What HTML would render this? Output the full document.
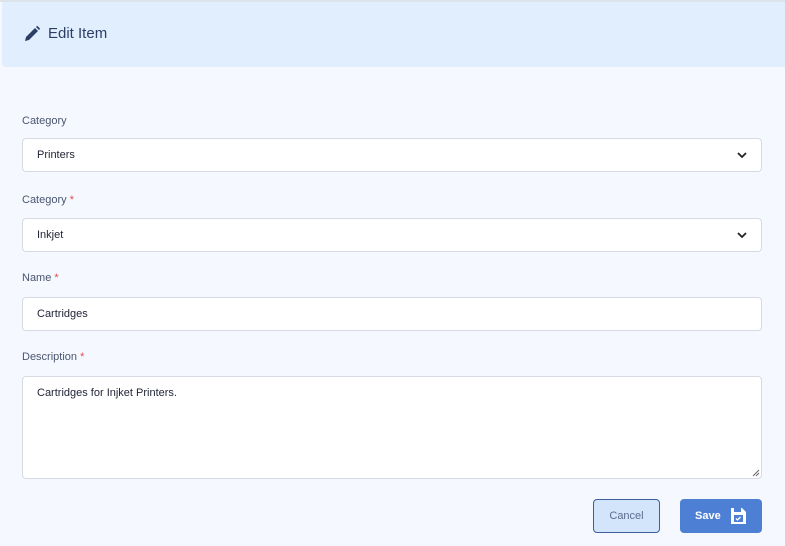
<!DOCTYPE html>
<html><head><style>
*{box-sizing:border-box;margin:0;padding:0}
body{width:785px;height:546px;overflow:hidden;background:#f5f9ff;font-family:"Liberation Sans",sans-serif;position:relative}
.tb{position:absolute;left:0;top:0;width:785px;height:2px;background:#dde3ea}
.hd{position:absolute;left:2px;top:2px;width:783px;height:65px;background:#e0eefd;border-radius:0 0 0 4px}
.hd span{position:absolute;left:46px;top:23px;font-size:15px;color:#2c3e66}
.hd svg{position:absolute;left:21px;top:23px}
.lb{position:absolute;left:22px;font-size:11px;color:#4a5570}
.lb i{color:#e04b4b;font-style:normal}
.in{position:absolute;left:22px;width:740px;height:34px;background:#fff;border:1px solid #d6dbe3;border-radius:4px;font-size:11px;color:#1f2235;padding:10px 14px}
.chev{position:absolute;right:14px;top:11px}
.btn{position:absolute;top:499px;height:34px;border-radius:4px;font-size:11px}
</style></head><body>
<div class="tb"></div>
<div class="hd"><svg width="18" height="18" viewBox="0 0 18 18"><path d="M2 16l1-4 9-9 3 3-9 9z" fill="#2c3e66"/><path d="M13 2l1.2-1.2 3 3L16 5z" fill="#2c3e66"/></svg><span>Edit Item</span></div>
<div class="lb" style="top:115px">Category</div>
<div class="in" style="top:138px">Printers<svg class="chev" width="10" height="10" viewBox="0 0 10 10"><path d="M1 3l4 4 4-4" stroke="#222" stroke-width="1.8" fill="none"/></svg></div>
<div class="lb" style="top:194px">Category <i>*</i></div>
<div class="in" style="top:218px">Inkjet<svg class="chev" width="10" height="10" viewBox="0 0 10 10"><path d="M1 3l4 4 4-4" stroke="#222" stroke-width="1.8" fill="none"/></svg></div>
<div class="lb" style="top:272px">Name <i>*</i></div>
<div class="in" style="top:297px">Cartridges</div>
<div class="lb" style="top:351px">Description <i>*</i></div>
<div class="in" style="top:376px;height:103px">Cartridges for Injket Printers.<svg style="position:absolute;right:1px;bottom:1px" width="8" height="8" viewBox="0 0 8 8"><path d="M7 1L1 7M7 4L4 7" stroke="#666" stroke-width="1"/></svg></div>
<div class="btn" style="left:593px;width:67px;background:#d3e5fb;border:1px solid #3d5f9e;color:#5a6d8f;text-align:center;line-height:32px">Cancel</div>
<div class="btn" style="left:680px;width:82px;background:#4d80d4;color:#fff;font-weight:bold;padding-left:15px;line-height:34px">Save<svg style="position:absolute;left:51px;top:8px" width="15" height="17" viewBox="0 0 15 17"><path d="M0 1h11l4 4v12H0z" fill="#fff"/><rect x="3" y="1" width="7" height="4" fill="#4d80d4"/><rect x="3" y="8" width="9" height="7" fill="#4d80d4"/><path d="M5 11.5l1.5 1.5 3-3" stroke="#fff" stroke-width="1.3" fill="none"/></svg></div>
</body></html>
